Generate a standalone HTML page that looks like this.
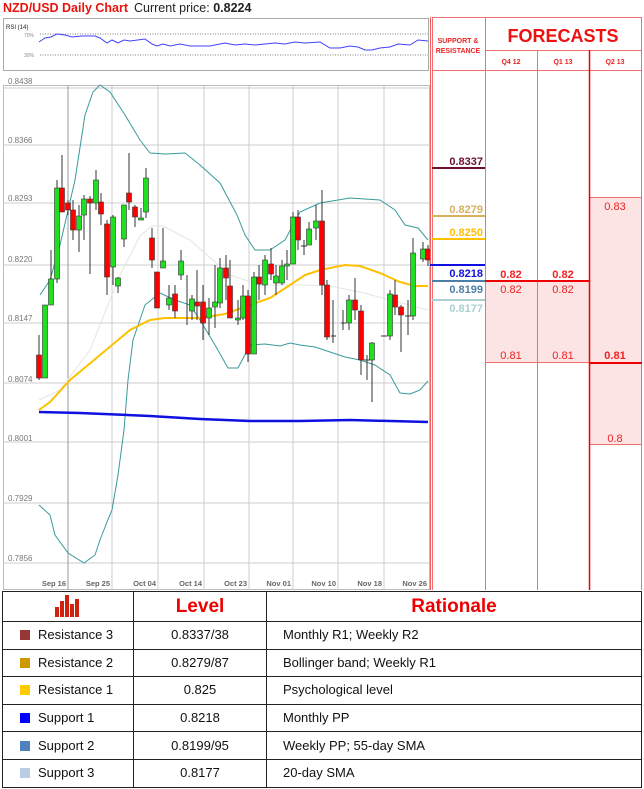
<!DOCTYPE html>
<html><head><meta charset="utf-8"><style>
body{margin:0;width:644px;height:789px;background:#fff;overflow:hidden;font-family:"Liberation Sans",Arial,sans-serif;position:relative}
svg{position:absolute;left:0;top:0}
table{position:absolute;left:2px;top:591px;border-collapse:collapse;width:640px;table-layout:fixed}
td{border:1.5px solid #222;height:26.6px;font-size:13px;color:#111;padding:0;line-height:14px}
td.c{text-align:center}
th{border:1.5px solid #222;height:29px;padding:0;color:#e00;font-size:19px;font-weight:bold;font-family:"Liberation Sans",Arial,sans-serif}
.sq{display:inline-block;width:10px;height:10px;margin:0 8px 0 17px;vertical-align:-1px}
</style></head><body>
<svg width="644" height="590" viewBox="0 0 644 590" font-family="Liberation Sans, Arial, sans-serif">
<text x="3" y="12" font-size="12.5" font-weight="bold" fill="#e8140c">NZD/USD Daily Chart</text>
<text x="134" y="12" font-size="12.5" fill="#222">Current price: <tspan font-weight="bold">0.8224</tspan></text>
<rect x="3.5" y="18.5" width="425" height="52" fill="#fff" stroke="#aaa"/>
<text x="6" y="29" font-size="6" fill="#222">RSI (14)</text>
<text x="24" y="37" font-size="5" fill="#888">70%</text><text x="24" y="57" font-size="5" fill="#888">30%</text>
<line x1="40" y1="34" x2="428" y2="34" stroke="#555" stroke-dasharray="1,1.5" stroke-width=".8"/>
<line x1="40" y1="55" x2="428" y2="55" stroke="#555" stroke-dasharray="1,1.5" stroke-width=".8"/>
<polyline fill="none" stroke="#4040ff" stroke-width="1" points="39,42 45,38 51,37 57,34 65,35 72,37 82,36 95,36 100,38 107,43 112,40 118,43 124,40 130,41 145,39 152,44 157,46 163,44 170,46 180,44 190,46 200,46 210,46 225,43 235,45 245,44 255,45 265,44 275,43 285,44 295,42 305,43 320,42 330,48 340,48 350,46 358,47 365,50 372,50 380,48 390,47 398,44 410,45 418,40 428,41"/>
<rect x="3.5" y="85.5" width="426" height="504" fill="#fff" stroke="#bbb"/>
<g stroke="#ccc" stroke-width="1">
<line x1="3" y1="88" x2="430" y2="88"/><line x1="3" y1="145" x2="430" y2="145"/><line x1="3" y1="203" x2="430" y2="203"/><line x1="3" y1="265" x2="430" y2="265"/><line x1="3" y1="323" x2="430" y2="323"/><line x1="3" y1="383" x2="430" y2="383"/><line x1="3" y1="442" x2="430" y2="442"/><line x1="3" y1="503" x2="430" y2="503"/><line x1="3" y1="563" x2="430" y2="563"/>
<line x1="112" y1="86" x2="112" y2="590"/><line x1="158" y1="86" x2="158" y2="590"/><line x1="204" y1="86" x2="204" y2="590"/><line x1="249" y1="86" x2="249" y2="590"/><line x1="293" y1="86" x2="293" y2="590"/><line x1="338" y1="86" x2="338" y2="590"/><line x1="384" y1="86" x2="384" y2="590"/>
</g>
<line x1="68" y1="86" x2="68" y2="590" stroke="#999"/>
<g font-size="8" fill="#777">
<text x="8" y="84">0.8438</text><text x="8" y="143">0.8366</text><text x="8" y="201">0.8293</text><text x="8" y="262">0.8220</text><text x="8" y="321">0.8147</text><text x="8" y="382">0.8074</text><text x="8" y="441">0.8001</text><text x="8" y="501">0.7929</text><text x="8" y="561">0.7856</text>
</g>
<g font-size="7.5" fill="#666" text-anchor="end" font-weight="bold">
<text x="66" y="586">Sep 16</text><text x="110" y="586">Sep 25</text><text x="156" y="586">Oct 04</text><text x="202" y="586">Oct 14</text><text x="247" y="586">Oct 23</text><text x="291" y="586">Nov 01</text><text x="336" y="586">Nov 10</text><text x="382" y="586">Nov 18</text><text x="427" y="586">Nov 26</text>
</g>
<polyline fill="none" stroke="#3a9a9a" stroke-width="1" points="40,295 50,280 60,245 75,180 85,115 93,92 100,85 110,92 125,115 140,140 150,153 165,154 185,153 200,165 220,183 237,215 245,235 255,250 270,250 285,240 300,212 320,203 350,198 380,200 395,210 405,225 418,228 428,240"/>
<polyline fill="none" stroke="#3a9a9a" stroke-width="1" points="39,505 50,515 55,535 68,553 84,563 95,555 100,540 107,522 112,510 118,475 124,430 128,380 133,340 145,305 160,293 175,300 190,305 200,320 215,345 228,368 238,368 250,345 265,344 280,346 290,343 300,345 315,347 330,352 345,357 360,360 375,365 390,375 400,393 410,394 420,390 428,381"/>
<polyline fill="none" stroke="#e4e4e4" stroke-width="1" points="39,400 60,390 90,350 120,275 140,236 152,226 163,226 190,240 215,262 230,275 260,285 300,285 330,286 360,292 390,300 428,310"/>
<polyline fill="none" stroke="#ffc000" stroke-width="2" points="39,410 50,402 70,380 100,355 130,330 150,320 165,318 200,318 225,314 250,305 270,298 290,285 305,275 320,270 345,265 360,266 380,273 400,282 415,286 428,286"/>
<polyline fill="none" stroke="#1010e0" stroke-width="2.5" points="39,412 80,413 150,416 200,419 250,421 300,421 350,420 428,422"/>
<g stroke="#333" stroke-width="1">
<line x1="39" y1="335" x2="39" y2="380"/><line x1="45" y1="305" x2="45" y2="378"/><line x1="51" y1="250" x2="51" y2="305"/><line x1="57" y1="180" x2="57" y2="283"/><line x1="62" y1="155" x2="62" y2="212"/><line x1="68" y1="200" x2="68" y2="215"/><line x1="73" y1="200" x2="73" y2="240"/><line x1="79" y1="205" x2="79" y2="252"/><line x1="84" y1="195" x2="84" y2="240"/><line x1="90" y1="196" x2="90" y2="274"/><line x1="96" y1="170" x2="96" y2="210"/><line x1="101" y1="193" x2="101" y2="225"/><line x1="107" y1="220" x2="107" y2="295"/><line x1="113" y1="215" x2="113" y2="285"/><line x1="118" y1="277" x2="118" y2="293"/><line x1="124" y1="205" x2="124" y2="247"/><line x1="129" y1="153" x2="129" y2="210"/><line x1="135" y1="205" x2="135" y2="227"/><line x1="141" y1="208" x2="141" y2="220"/><line x1="146" y1="168" x2="146" y2="218"/><line x1="152" y1="228" x2="152" y2="268"/><line x1="157" y1="272" x2="157" y2="308"/><line x1="163" y1="228" x2="163" y2="268"/><line x1="169" y1="285" x2="169" y2="310"/><line x1="175" y1="285" x2="175" y2="318"/><line x1="181" y1="250" x2="181" y2="280"/><line x1="187" y1="275" x2="187" y2="325"/><line x1="192" y1="295" x2="192" y2="320"/><line x1="197" y1="270" x2="197" y2="320"/><line x1="203" y1="285" x2="203" y2="340"/><line x1="209" y1="298" x2="209" y2="335"/><line x1="215" y1="265" x2="215" y2="328"/><line x1="220" y1="258" x2="220" y2="308"/><line x1="226" y1="255" x2="226" y2="300"/><line x1="230" y1="260" x2="230" y2="318"/><line x1="238" y1="300" x2="238" y2="325"/><line x1="243" y1="285" x2="243" y2="320"/><line x1="248" y1="290" x2="248" y2="362"/><line x1="254" y1="272" x2="254" y2="354"/><line x1="259" y1="265" x2="259" y2="300"/><line x1="265" y1="255" x2="265" y2="295"/><line x1="271" y1="248" x2="271" y2="280"/><line x1="276" y1="265" x2="276" y2="295"/><line x1="282" y1="260" x2="282" y2="285"/><line x1="287" y1="250" x2="287" y2="280"/><line x1="293" y1="212" x2="293" y2="264"/><line x1="298" y1="210" x2="298" y2="250"/><line x1="304" y1="240" x2="304" y2="255"/><line x1="309" y1="222" x2="309" y2="245"/><line x1="316" y1="205" x2="316" y2="240"/><line x1="322" y1="190" x2="322" y2="295"/><line x1="327" y1="280" x2="327" y2="340"/><line x1="333" y1="300" x2="333" y2="343"/><line x1="343" y1="310" x2="343" y2="330"/><line x1="349" y1="295" x2="349" y2="330"/><line x1="355" y1="278" x2="355" y2="320"/><line x1="361" y1="305" x2="361" y2="375"/><line x1="367" y1="355" x2="367" y2="380"/><line x1="372" y1="342" x2="372" y2="402"/><line x1="390" y1="290" x2="390" y2="340"/><line x1="395" y1="280" x2="395" y2="315"/><line x1="401" y1="305" x2="401" y2="352"/><line x1="408" y1="300" x2="408" y2="335"/><line x1="413" y1="238" x2="413" y2="320"/><line x1="423" y1="242" x2="423" y2="262"/><line x1="428" y1="245" x2="428" y2="266"/>
</g>
<g stroke="#333" stroke-width=".6" fill="#f00">
<rect x="36.5" y="355" width="5" height="23"/><rect x="59.5" y="188" width="5" height="24"/><rect x="65.5" y="203" width="5" height="7"/><rect x="70.5" y="210" width="5" height="20"/><rect x="87.5" y="199" width="5" height="4"/><rect x="98.5" y="202" width="5" height="12"/><rect x="104.5" y="224" width="5" height="53"/><rect x="126.5" y="193" width="5" height="9"/><rect x="132.5" y="207" width="5" height="10"/><rect x="149.5" y="238" width="5" height="22"/><rect x="154.5" y="272" width="5" height="36"/><rect x="172.5" y="294" width="5" height="17"/><rect x="194.5" y="302" width="5" height="4"/><rect x="200.5" y="302" width="5" height="21"/><rect x="223.5" y="268" width="5" height="10"/><rect x="227.5" y="286" width="5" height="32"/><rect x="245.5" y="296" width="5" height="58"/><rect x="256.5" y="277" width="5" height="7"/><rect x="268.5" y="264" width="5" height="10"/><rect x="295.5" y="217" width="5" height="23"/><rect x="319.5" y="221" width="5" height="64"/><rect x="324.5" y="285" width="5" height="52"/><rect x="352.5" y="300" width="5" height="10"/><rect x="358.5" y="311" width="5" height="49"/><rect x="392.5" y="295" width="5" height="12"/><rect x="398.5" y="307" width="5" height="8"/><rect x="425.5" y="249" width="5" height="11"/>
</g>
<g stroke="#333" stroke-width=".6" fill="#1ee01e">
<rect x="42.5" y="305" width="5" height="73"/><rect x="48.5" y="279" width="5" height="26"/><rect x="54.5" y="188" width="5" height="91"/><rect x="76.5" y="216" width="5" height="14"/><rect x="81.5" y="199" width="5" height="16"/><rect x="93.5" y="180" width="5" height="23"/><rect x="110.5" y="217" width="5" height="50"/><rect x="115.5" y="278" width="5" height="8"/><rect x="121.5" y="205" width="5" height="34"/><rect x="138.5" y="218" width="5" height="2"/><rect x="143.5" y="178" width="5" height="34"/><rect x="160.5" y="261" width="5" height="7"/><rect x="166.5" y="298" width="5" height="7"/><rect x="178.5" y="261" width="5" height="14"/><rect x="189.5" y="299" width="5" height="12"/><rect x="206.5" y="308" width="5" height="10"/><rect x="212.5" y="302" width="5" height="5"/><rect x="217.5" y="268" width="5" height="35"/><rect x="235.5" y="318" width="5" height="2"/><rect x="240.5" y="296" width="5" height="22"/><rect x="251.5" y="277" width="5" height="77"/><rect x="262.5" y="260" width="5" height="25"/><rect x="273.5" y="276" width="5" height="7"/><rect x="279.5" y="266" width="5" height="17"/><rect x="284.5" y="264" width="5" height="2"/><rect x="290.5" y="217" width="5" height="47"/><rect x="306.5" y="229" width="5" height="16"/><rect x="313.5" y="221" width="5" height="7"/><rect x="346.5" y="300" width="5" height="23"/><rect x="369.5" y="343" width="5" height="17"/><rect x="387.5" y="294" width="5" height="42"/><rect x="410.5" y="253" width="5" height="63"/><rect x="420.5" y="249" width="5" height="10"/>
</g>
<g stroke="#333" stroke-width="1"><line x1="331" y1="336" x2="336" y2="336"/><line x1="341" y1="323" x2="346" y2="323"/><line x1="364" y1="360" x2="370" y2="360"/><line x1="381" y1="336" x2="387" y2="336"/><line x1="405" y1="316" x2="411" y2="316"/><line x1="301" y1="246" x2="307" y2="246"/></g>
<line x1="430.5" y1="17" x2="430.5" y2="590" stroke="#f06060" stroke-width="1"/>
<rect x="485" y="281" width="104" height="81" fill="#fde4e4"/>
<rect x="589" y="197" width="52" height="247" fill="#fde4e4"/>
<g stroke="#f07070" stroke-width="1" fill="none">
<line x1="432" y1="17.5" x2="642" y2="17.5"/><line x1="432.5" y1="17" x2="432.5" y2="590"/><line x1="485.5" y1="17" x2="485.5" y2="590"/><line x1="537.5" y1="50" x2="537.5" y2="590"/><line x1="641.5" y1="17" x2="641.5" y2="590"/>
<line x1="485" y1="50.5" x2="642" y2="50.5"/><line x1="432" y1="70.5" x2="642" y2="70.5"/>
<line x1="485" y1="362.5" x2="589" y2="362.5"/><line x1="589" y1="197.5" x2="642" y2="197.5"/><line x1="589" y1="444.5" x2="642" y2="444.5"/>
</g>
<line x1="589.5" y1="50" x2="589.5" y2="590" stroke="#e00" stroke-width="1.5"/>
<line x1="485" y1="281" x2="589" y2="281" stroke="#e00" stroke-width="2"/>
<line x1="589" y1="363" x2="642" y2="363" stroke="#e00" stroke-width="2"/>
<text x="563" y="42" font-size="18" font-weight="bold" fill="#ee1111" text-anchor="middle">FORECASTS</text>
<text x="458" y="43" font-size="7" font-weight="bold" fill="#ee2222" text-anchor="middle">SUPPORT &amp;</text>
<text x="458" y="53" font-size="7" font-weight="bold" fill="#ee2222" text-anchor="middle">RESISTANCE</text>
<g font-size="7" font-weight="bold" fill="#ee2222" text-anchor="middle"><text x="511" y="64">Q4 12</text><text x="563" y="64">Q1 13</text><text x="615" y="64">Q2 13</text></g>
<g font-size="11" text-anchor="middle" fill="#ee2222">
<text x="511" y="278" font-weight="bold">0.82</text><text x="563" y="278" font-weight="bold">0.82</text>
<text x="511" y="293">0.82</text><text x="563" y="293">0.82</text>
<text x="511" y="359">0.81</text><text x="563" y="359">0.81</text><text x="615" y="359" font-weight="bold">0.81</text>
<text x="615" y="210">0.83</text><text x="615" y="442">0.8</text>
</g>
<g font-size="11" font-weight="bold" text-anchor="end">
<text x="483" y="165" fill="#6b1030">0.8337</text><text x="483" y="213" fill="#d8b060">0.8279</text><text x="483" y="236" fill="#ffc000">0.8250</text><text x="483" y="277" fill="#1010e0">0.8218</text><text x="483" y="293" fill="#4a80a8">0.8199</text><text x="483" y="312" fill="#a8d0d0">0.8177</text>
</g>
<line x1="432" y1="168" x2="485" y2="168" stroke="#6b1030" stroke-width="2"/>
<line x1="432" y1="216" x2="485" y2="216" stroke="#d8b060" stroke-width="2"/>
<line x1="432" y1="239" x2="485" y2="239" stroke="#ffc000" stroke-width="2"/>
<line x1="430" y1="265" x2="485" y2="265" stroke="#1010e0" stroke-width="2"/>
<line x1="432" y1="281" x2="485" y2="281" stroke="#4a80a8" stroke-width="2"/>
<line x1="432" y1="300" x2="485" y2="300" stroke="#a8d0d0" stroke-width="2"/>
</svg>
<table>
<tr><th style="width:130px"><svg width="26" height="22" style="position:static;vertical-align:middle"><g fill="#d02010"><rect x="0" y="12" width="4" height="10"/><rect x="5" y="6" width="4" height="16"/><rect x="10" y="0" width="4" height="22"/><rect x="15" y="9" width="4" height="13"/><rect x="20" y="4" width="4" height="18"/></g></svg></th><th style="width:132px">Level</th><th>Rationale</th></tr>
<tr><td><span class="sq" style="background:#953735"></span>Resistance 3</td><td class="c">0.8337/38</td><td style="padding-left:16px">Monthly R1; Weekly R2</td></tr>
<tr><td><span class="sq" style="background:#cc9900"></span>Resistance 2</td><td class="c">0.8279/87</td><td style="padding-left:16px">Bollinger band; Weekly R1</td></tr>
<tr><td><span class="sq" style="background:#ffcc00"></span>Resistance 1</td><td class="c">0.825</td><td style="padding-left:16px">Psychological level</td></tr>
<tr><td><span class="sq" style="background:#0000ff"></span>Support 1</td><td class="c">0.8218</td><td style="padding-left:16px">Monthly PP</td></tr>
<tr><td><span class="sq" style="background:#4f81bd"></span>Support 2</td><td class="c">0.8199/95</td><td style="padding-left:16px">Weekly PP; 55-day SMA</td></tr>
<tr><td><span class="sq" style="background:#b9cde5"></span>Support 3</td><td class="c">0.8177</td><td style="padding-left:16px">20-day SMA</td></tr>
</table>
</body></html>
